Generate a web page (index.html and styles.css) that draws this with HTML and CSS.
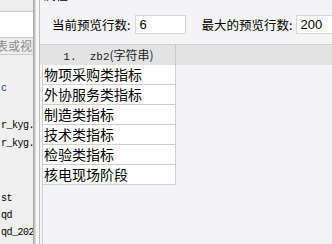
FILE: index.html
```html
<!DOCTYPE html>
<html>
<head>
<meta charset="utf-8">
<link rel="stylesheet" href="styles.css">
</head>
<body>
<div class="app">
  <aside class="side">
    <div class="side-top"></div>
    <div class="side-input"></div>
    <div class="side-search"><span class="ph">表或视图</span></div>
    <ul class="tree">
      <li class="t-item t-blue t-c">c</li>
      <li class="t-item t-r1">r_kyg.</li>
      <li class="t-item t-r2">r_kyg.</li>
      <li class="t-item t-st">st</li>
      <li class="t-item">qd</li>
      <li class="t-item">qd_202</li>
    </ul>
  </aside>
  <div class="shadow"></div>
  <div class="gutter"></div>
  <main class="main">
    <div class="title"><span>属性</span></div>
    <div class="toolbar">
      <label class="lbl">当前预览行数:</label>
      <div class="inp inp-a">6</div>
      <label class="lbl lbl-b">最大的预览行数:</label>
      <div class="inp inp-b">200</div>
    </div>
    <div class="grid">
      <div class="head">
        <div class="hcell"><span class="num">1.&nbsp;&nbsp;zb2</span>(字符串)</div>
      </div>
      <div class="body">
        <div class="col">
          <div class="cell">物项采购类指标</div>
          <div class="cell">外协服务类指标</div>
          <div class="cell">制造类指标</div>
          <div class="cell">技术类指标</div>
          <div class="cell">检验类指标</div>
          <div class="cell">核电现场阶段</div>
          <div class="rest"></div>
        </div>
      </div>
    </div>
  </main>
</div>
</body>
</html>
```
FILE: styles.css
```css
* { box-sizing: border-box; }
html, body { margin: 0; padding: 0; }
body {
  width: 332px;
  height: 244px;
  overflow: hidden;
  background: #f4f4f6;
  font-family: "Noto Sans CJK SC", "Noto Sans", sans-serif;
  color: #000;
}
.app { display: flex; height: 244px; }
.side {
  width: 33px;
  background: #f0f0f0;
  display: flex;
  flex-direction: column;
  overflow: hidden;
}
.side-top { height: 12px; background: #eeeeee; border-bottom: 1px solid #c9c9c9; }
.side-input { height: 26px; background: #ffffff; border-bottom: 1px solid #c9c9c9; }
.side-search {
  height: 17px;
  background: #eeeeee;
  border-bottom: 1px solid #c9c9c9;
  white-space: nowrap;
  overflow: hidden;
}
.ph {
  display: block;
  margin-left: -4px;
  font-size: 12px;
  line-height: 16px;
  color: #8a8a8a;
}
.tree {
  list-style: none;
  margin: 0;
  padding: 0;
  font-family: "Liberation Mono", monospace;
  font-size: 10px;
  letter-spacing: -0.5px;
  white-space: nowrap;
}
.t-item { margin-left: 1px; height: 17px; line-height: 17px; }
.t-c { margin-top: 25px; }
.t-r1 { margin-top: 20px; }
.t-r2 { margin-top: 1px; }
.t-st { margin-top: 38px; }
.t-blue { color: #1d3a86; }
.shadow {
  width: 3px;
  background: linear-gradient(to right, #9a9a9a, #c2c2c2, #e6e6e6);
}
.gutter { width: 4px; background: #f7f7f8; border-right: 1px solid #bdbdbd; }
.main { flex: 1; display: flex; flex-direction: column; min-width: 0; }
.title {
  height: 8px;
  overflow: hidden;
  padding-left: 4px;
  font-size: 12px;
}
.title span { display: block; margin-top: -12px; line-height: 14px; }
.toolbar {
  height: 37px;
  display: flex;
  align-items: center;
  padding: 0 0 3px 12px;
  white-space: nowrap;
  border-bottom: 1px solid #cfcfcf;
}
.lbl { font-size: 12.5px; }
.lbl-b { margin-left: 15px; }
.inp {
  height: 19px;
  background: #fff;
  border: 1px solid #d6d6d6;
  font-family: "Liberation Sans", sans-serif;
  font-size: 13px;
  line-height: 17px;
  padding-left: 3px;
  flex-shrink: 0;
}
.inp-a { width: 51px; margin-left: 5px; }
.inp-b { width: 40px; margin-left: 4px; }
.grid { flex: 1; display: flex; flex-direction: column; padding-left: 2px; }
.head { height: 20px; background: #e3e3e3; display: flex; margin-left: -2px; padding-left: 2px; }
.hcell {
  width: 134px;
  height: 20px;
  border-right: 1px solid #cfcab0;
  text-align: center;
  font-size: 12px;
  line-height: 20px;
  color: #222;
}
.num { font-family: "Liberation Mono", monospace; font-size: 11px; }
.body { flex: 1; display: flex; }
.col { width: 134px; display: flex; flex-direction: column; border-left: 1px solid #d0d0d0; }
.cell {
  height: 20px;
  background: #fff;
  border-bottom: 1px solid #d0d0d0;
  border-right: 1px solid #d0d0d0;
  font-size: 14px;
  line-height: 19px;
  padding-left: 1px;
  white-space: nowrap;
}
.rest { flex: 1; }
```
